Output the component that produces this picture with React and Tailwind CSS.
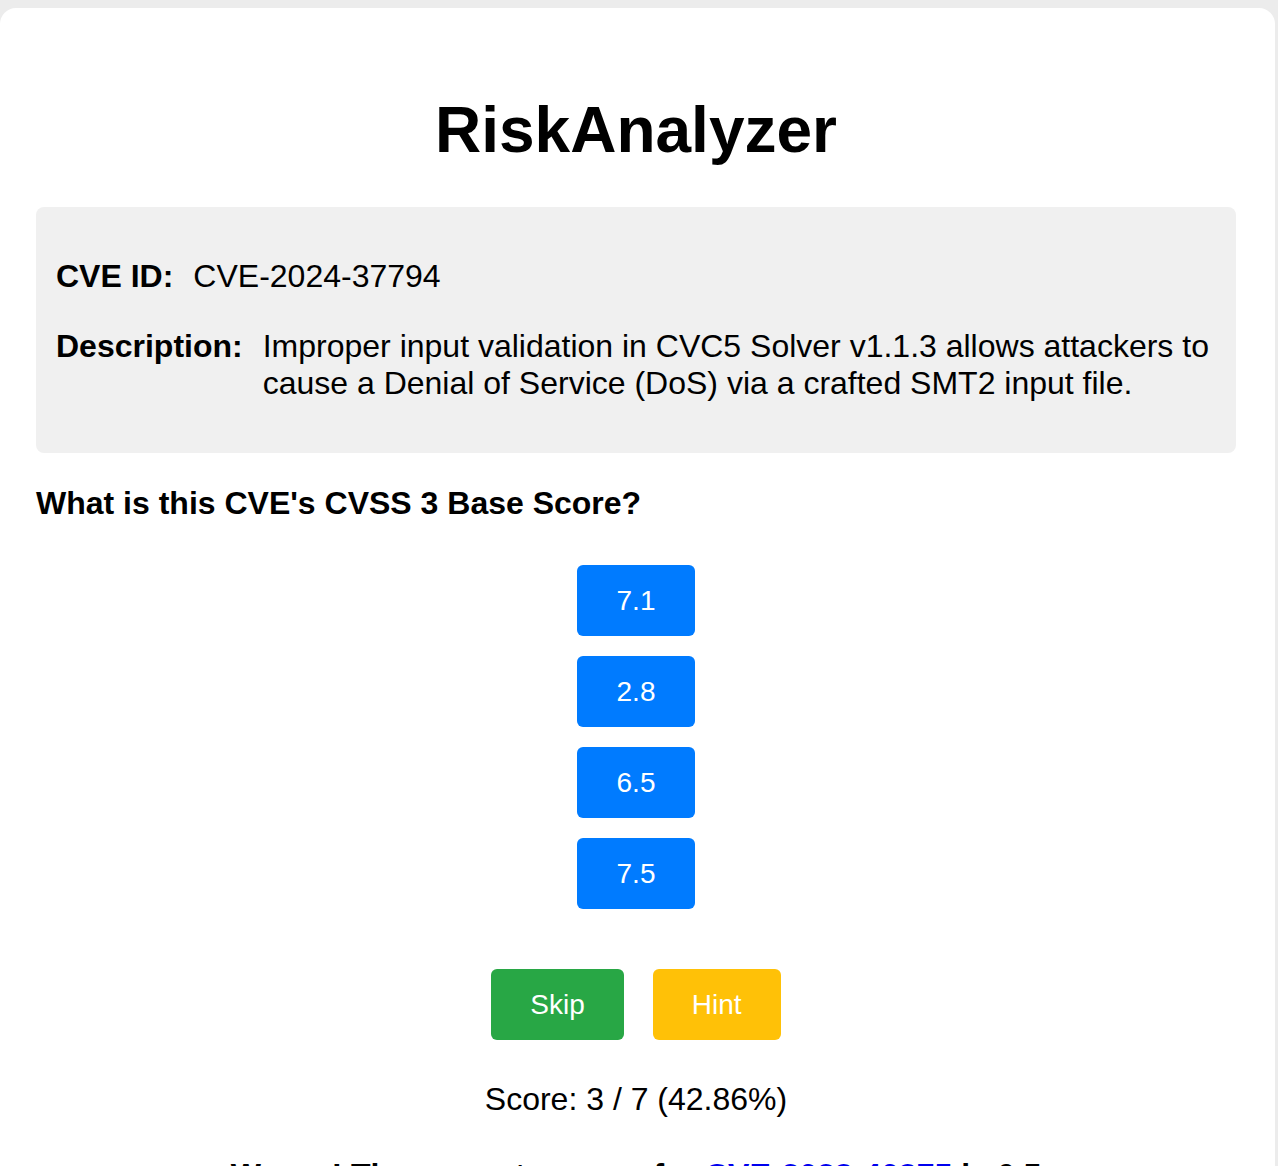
const options = ['7.1', '2.8', '6.5', '7.5'];

export default function App() {
  return (
    <div className="min-h-screen bg-[#ececec] pt-[8px] pr-[3px] font-['Liberation_Sans',Arial,sans-serif] text-black">
      <div className="bg-white rounded-t-2xl pl-[36px] pr-[39px] pb-10 min-h-[1158px]">
        <h1 className="pt-[85px] text-center text-[64px] leading-[74px] font-bold">RiskAnalyzer</h1>

        {/* CVE info */}
        <div className="mt-10 bg-[#f0f0f0] rounded-lg px-5 pt-[51px] pb-[51px] flex flex-col gap-[33px] text-[32px] leading-[37px]">
          <div className="flex gap-5">
            <span className="font-bold shrink-0">CVE ID:</span>
            <span>CVE-2024-37794</span>
          </div>
          <div className="flex gap-5">
            <span className="font-bold shrink-0">Description:</span>
            <span>
              Improper input validation in CVC5 Solver v1.1.3 allows attackers to cause a Denial of Service (DoS) via a crafted SMT2 input file.
            </span>
          </div>
        </div>

        <h3 className="mt-8 text-[32px] leading-[37px] font-bold">What is this CVE's CVSS 3 Base Score?</h3>

        <div className="mt-[43px] flex flex-col items-center gap-5">
          {options.map(o => (
            <button
              key={o}
              className="w-[118px] h-[71px] rounded-[6px] bg-[#007bff] text-white text-[28px] leading-[32px] flex items-center justify-center"
            >
              {o}
            </button>
          ))}
        </div>

        <div className="mt-[60px] flex justify-center gap-[29px]">
          <button className="h-[71px] px-[39px] rounded-[6px] bg-[#28a745] text-white text-[28px] leading-[32px]">Skip</button>
          <button className="h-[71px] px-[39px] rounded-[6px] bg-[#ffc107] text-white text-[28px] leading-[32px]">Hint</button>
        </div>

        <p className="mt-[41px] text-center text-[32px] leading-[37px]">Score: 3 / 7 (42.86%)</p>

        <p className="mt-[39px] text-center text-[32px] leading-[37px] font-bold">
          Wrong! The correct answer for <a href="#" className="text-[#0000ee] underline">CVE-2023-40375</a> is 6.5
        </p>
      </div>
    </div>
  );
}
